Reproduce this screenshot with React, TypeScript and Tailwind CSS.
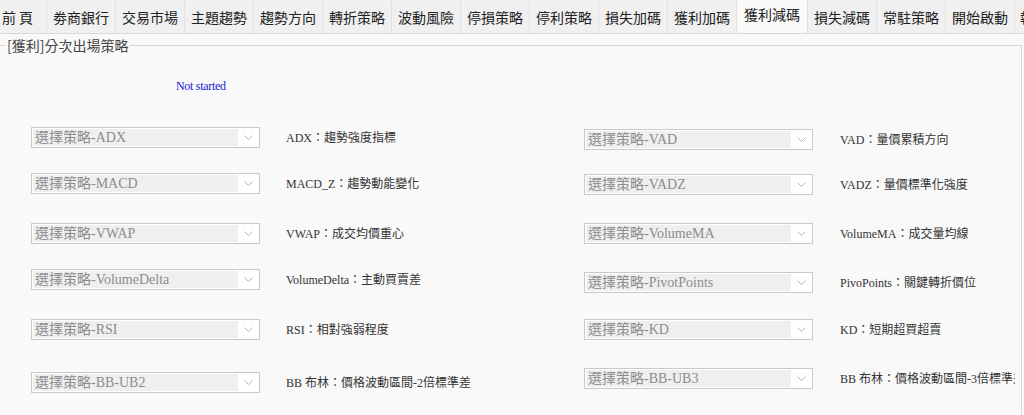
import React from 'react';

type Row = { value: string; label: string; gap: string };

const tabs = [
  '劵商銀行', '交易市場', '主題趨勢', '趨勢方向', '轉折策略', '波動風險',
  '停損策略', '停利策略', '損失加碼', '獲利加碼',
];
const tabsAfter = ['損失減碼', '常駐策略', '開始啟動'];

const leftRows: Row[] = [
  { value: 'ADX', label: 'ADX：趨勢強度指標', gap: 'mt-[34px]' },
  { value: 'MACD', label: 'MACD_Z：趨勢動能變化', gap: 'mt-[25px]' },
  { value: 'VWAP', label: 'VWAP：成交均價重心', gap: 'mt-[29px]' },
  { value: 'VolumeDelta', label: 'VolumeDelta：主動買賣差', gap: 'mt-[25px]' },
  { value: 'RSI', label: 'RSI：相對強弱程度', gap: 'mt-[29px]' },
  { value: 'BB-UB2', label: 'BB 布林：價格波動區間-2倍標準差', gap: 'mt-[32px]' },
];

const rightRows: Row[] = [
  { value: 'VAD', label: 'VAD：量價累積方向', gap: 'mt-[36px]' },
  { value: 'VADZ', label: 'VADZ：量價標準化強度', gap: 'mt-[24px]' },
  { value: 'VolumeMA', label: 'VolumeMA：成交量均線', gap: 'mt-[28px]' },
  { value: 'PivotPoints', label: 'PivoPoints：關鍵轉折價位', gap: 'mt-[28px]' },
  { value: 'KD', label: 'KD：短期超買超賣', gap: 'mt-[26px]' },
  { value: 'BB-UB3', label: 'BB 布林：價格波動區間-3倍標準差', gap: 'mt-[28px]' },
];

const Tab = ({ text }: { text: string }) => (
  <div className="flex-none w-[69px] h-[33px] bg-[#f0f0f0] border-r border-[#e2e2e2] text-center pt-[7px] leading-[20px]">
    {text}
  </div>
);

const Combo = ({ value }: { value: string }) => (
  <div className="flex-none w-[229px] h-[21px] bg-white border border-[#c9c9c9] p-px flex">
    <div className="w-[205px] h-full bg-[#efefef] text-[#8c8c8c] text-[14px] leading-[17px] pl-[2px] whitespace-nowrap overflow-hidden">
      選擇策略-{value}
    </div>
    <div className="flex-1 flex items-center justify-center">
      <svg width="9" height="5" viewBox="0 0 9 5">
        <polyline points="0.5,0.5 4.5,4.5 8.5,0.5" fill="none" stroke="#b4b4b4" strokeWidth="1" />
      </svg>
    </div>
  </div>
);

const Column = ({ rows, width, labelClass }: { rows: Row[]; width: string; labelClass: string }) => (
  <div className={`flex-none flex flex-col ${width}`}>
    {rows.map((r) => (
      <div key={r.value} className={`flex items-center h-[21px] ${r.gap}`}>
        <Combo value={r.value} />
        <div className={`text-[12px] text-[#333] whitespace-nowrap overflow-hidden ${labelClass}`}>{r.label}</div>
      </div>
    ))}
  </div>
);

export default function App() {
  return (
    <div className="w-[1024px] h-[415px] overflow-hidden bg-[#f9f9f9]">
      <div className="flex h-[34px] border-b border-[#dadada] bg-[#f0f0f0] overflow-hidden text-[14px] text-[#222] font-['Noto_Sans_CJK_TC',sans-serif]">
        <div className="flex-none w-[47px] h-[33px] border-r border-[#e2e2e2] pl-[2px] pt-[7px] leading-[20px] tracking-[3px] whitespace-nowrap">前頁</div>
        {tabs.map((t) => (
          <Tab key={t} text={t} />
        ))}
        <div className="flex-none w-[71px] h-[34px] bg-[#fafafa] border-r border-[#dcdcdc] text-center pt-[4px] leading-[20px]">
          獲利減碼
        </div>
        {tabsAfter.map((t) => (
          <Tab key={t} text={t} />
        ))}
        <div className="flex-none w-[69px] h-[33px] bg-[#f0f0f0] pl-[5px] pt-[7px] leading-[20px]">報表設定</div>
      </div>

      <fieldset className="-ml-px w-[1023px] h-[400px] min-w-0 p-0 border border-[#d7d7d7]">
        <legend className="ml-[6px] px-[1px] text-[14px] leading-[22px] text-[#444] font-['Noto_Sans_CJK_TC',sans-serif]">
          [獲利]分次出場策略
        </legend>
        <div className="font-['Liberation_Serif','Noto_Sans_CJK_TC',serif]">
          <div className="pl-[176px] pt-[23px] text-[12px] leading-[14px] tracking-[-0.3px] text-[#1a1ad8]">Not started</div>
          <div className="flex pl-[31px]">
            <Column rows={leftRows} width="w-[553px]" labelClass="ml-[26px]" />
            <Column rows={rightRows} width="w-[439px]" labelClass="ml-[27px] w-[175px]" />
          </div>
        </div>
      </fieldset>
    </div>
  );
}
